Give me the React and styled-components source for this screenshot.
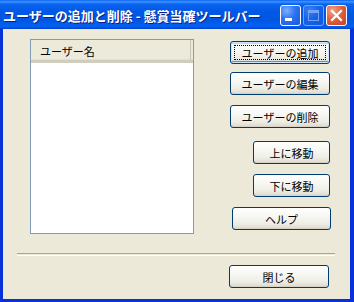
import React from "react";
import styled, { createGlobalStyle } from "styled-components";

const Global = createGlobalStyle`
  html, body { margin: 0; padding: 0; background: #ece9d8; }
  body { font-family: "Noto Sans CJK JP", "Noto Sans", sans-serif; }
`;

const Window = styled.div`
  width: 354px;
  height: 302px;
  display: flex;
  flex-direction: column;
  background: #0831d9;
  overflow: hidden;
`;

const TitleBar = styled.div`
  height: 29px;
  flex: none;
  display: flex;
  align-items: center;
  padding: 0 7px 0 3px;
  background: linear-gradient(
    to bottom,
    #0a5ff0 0%,
    #3d95ff 6%,
    #0a63ee 14%,
    #0058e6 40%,
    #0056e3 70%,
    #0260f1 88%,
    #005ae9 94%,
    #003ec9 100%
  );
`;

const Title = styled.div`
  flex: 1;
  color: #fff;
  font-size: 13px;
  font-weight: 700;
  white-space: nowrap;
  text-shadow: 1px 1px 0 #0f1e84;
  line-height: 1;
  margin-top: 1px;
`;

const CapButtons = styled.div`
  display: flex;
  gap: 2px;
  margin-top: 2px;
`;

const CapButton = styled.div`
  width: 21px;
  height: 21px;
  box-sizing: border-box;
  border: 1px solid #fff;
  border-radius: 3px;
  display: flex;
  align-items: center;
  justify-content: center;
  position: relative;
  background: ${(p) =>
    p.$variant === "close"
      ? "radial-gradient(circle at 30% 25%, #f0a58c 0%, #e0633f 45%, #c8401c 100%)"
      : "radial-gradient(circle at 30% 25%, #7fb0ff 0%, #2d72f2 45%, #1c55d8 100%)"};
  opacity: ${(p) => (p.$disabled ? 0.45 : 1)};
`;

const Frame = styled.div`
  flex: 1;
  display: flex;
  flex-direction: column;
  margin: 0 4px 3px 3px;
  background: #ece9d8;
`;

const MainRow = styled.div`
  display: flex;
  padding: 10px 0 0 27px;
`;

const ListBox = styled.div`
  width: 164px;
  height: 195px;
  box-sizing: border-box;
  border: 1px solid #7f9db9;
  background: #fff;
  display: flex;
  flex-direction: column;
`;

const ListHeader = styled.div`
  height: 23px;
  box-sizing: border-box;
  display: flex;
  align-items: center;
  background: #ebeadb;
  border-bottom: 3px solid #d0cdbf;
  box-shadow: inset 0 -1px 0 #e2dfd2;
`;

const HeaderCell = styled.div`
  flex: 1;
  height: 100%;
  box-sizing: border-box;
  display: flex;
  align-items: center;
  padding-left: 9px;
  padding-top: 2px;
  font-size: 11px;
  color: #000;
  border-right: 1px solid #c7c5b2;
  margin-right: 2px;
`;

const ButtonColumn = styled.div`
  display: flex;
  flex-direction: column;
  width: 101px;
  margin-left: 36px;
  padding-top: 2px;
`;

const Button = styled.div`
  width: ${(p) => p.$w || 100}px;
  height: 23px;
  box-sizing: border-box;
  margin-top: ${(p) => p.$mt || 0}px;
  margin-left: ${(p) => p.$ml || 0}px;
  border: 1px solid #003c74;
  border-radius: 3px;
  background: linear-gradient(to bottom, #ffffff 0%, #f7f7f3 40%, #eeede5 75%, #dcd8cc 100%);
  box-shadow: ${(p) =>
    p.$default
      ? "inset 0 0 0 1px #cee7ff, inset 0 -2px 0 0 #6982ee, inset 0 2px 0 0 #bcd4f6"
      : "inset 0 -1px 0 0 #d6d0c5"};
  display: flex;
  align-items: center;
  justify-content: center;
  font-size: 11px;
  color: #000;
  position: relative;
  padding-top: 1px;
`;

const FocusRing = styled.div`
  position: absolute;
  inset: 3px;
  border: 1px dotted #000;
  pointer-events: none;
`;

const Separator = styled.div`
  margin: 19px 0 0 14px;
  width: 318px;
  height: 1px;
  border-top: 1px solid #aca899;
  border-bottom: 1px solid #fff;
`;

const Footer = styled.div`
  display: flex;
  padding: 9px 0 0 226px;
`;

const MinIcon = () => (
  <svg width="19" height="19" viewBox="0 0 19 19" style={{ position: "absolute", left: 0, top: 0 }}>
    <rect x="4" y="12" width="7" height="3" fill="#fff" />
  </svg>
);

const MaxIcon = () => (
  <svg width="19" height="19" viewBox="0 0 19 19" style={{ position: "absolute", left: 0, top: 0 }}>
    <rect x="4.5" y="4.5" width="10" height="10" fill="none" stroke="#fff" strokeWidth="1" />
    <rect x="4" y="4" width="11" height="3" fill="#fff" />
  </svg>
);

const CloseIcon = () => (
  <svg width="19" height="19" viewBox="0 0 19 19" style={{ position: "absolute", left: 0, top: 0 }}>
    <path d="M5 5 L14 14 M14 5 L5 14" stroke="#fff" strokeWidth="2.2" strokeLinecap="square" />
  </svg>
);

export default function App() {
  return (
    <>
      <Global />
      <Window>
        <TitleBar>
          <Title>ユーザーの追加と削除 - 懸賞当確ツールバー</Title>
          <CapButtons>
            <CapButton>
              <MinIcon />
            </CapButton>
            <CapButton $disabled>
              <MaxIcon />
            </CapButton>
            <CapButton $variant="close">
              <CloseIcon />
            </CapButton>
          </CapButtons>
        </TitleBar>
        <Frame>
          <MainRow>
            <ListBox>
              <ListHeader>
                <HeaderCell>ユーザー名</HeaderCell>
              </ListHeader>
            </ListBox>
            <ButtonColumn>
              <Button $default>
                <FocusRing />
                ユーザーの追加
              </Button>
              <Button $mt={8}>ユーザーの編集</Button>
              <Button $mt={10}>ユーザーの削除</Button>
              <Button $mt={13} $w={77} $ml={23}>上に移動</Button>
              <Button $mt={10} $w={77} $ml={23}>下に移動</Button>
              <Button $mt={10} $w={99} $ml={2}>ヘルプ</Button>
            </ButtonColumn>
          </MainRow>
          <Separator />
          <Footer>
            <Button>閉じる</Button>
          </Footer>
        </Frame>
      </Window>
    </>
  );
}
